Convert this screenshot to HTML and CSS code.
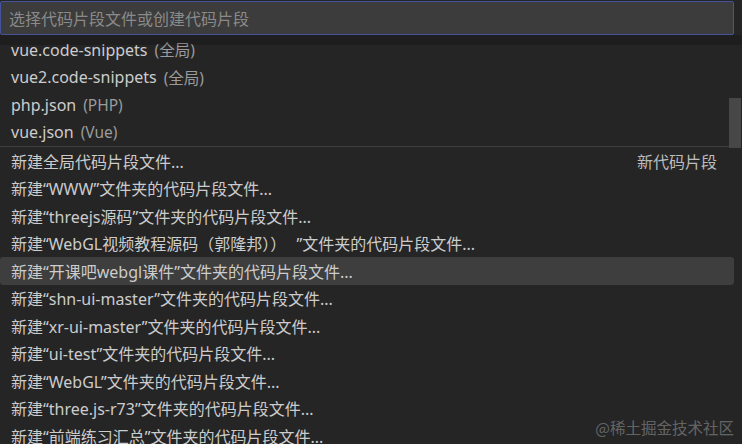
FILE: index.html
```html
<!DOCTYPE html>
<html lang="zh-CN">
<head>
    <meta charset="UTF-8">
    <meta name="viewport" content="width=device-width, initial-scale=1.0">
    <title>配置用户代码片段</title>
    <link rel="stylesheet" href="styles.css">
</head>
<body>

    <div class="picker">
        <!-- search box -->
        <div class="input-row">
            <input type="text" class="search" placeholder="选择代码片段文件或创建代码片段">
        </div>

        <div class="list">
            <div class="scroll-shadow"></div>
            <div class="scrollbar"></div>

            <!-- existing snippet files -->
            <div class="row"><span class="label">vue.code-snippets</span><span class="desc">(全局)</span></div>
            <div class="row"><span class="label">vue2.code-snippets</span><span class="desc">(全局)</span></div>
            <div class="row"><span class="label">php.json</span><span class="desc">(PHP)</span></div>
            <div class="row"><span class="label">vue.json</span><span class="desc">(Vue)</span></div>

            <!-- new snippet file -->
            <div class="row separator"><span class="label">新建全局代码片段文件...</span><span class="group">新代码片段</span></div>
            <div class="row"><span class="label">新建“WWW”文件夹的代码片段文件...</span></div>
            <div class="row"><span class="label">新建“threejs源码”文件夹的代码片段文件...</span></div>
            <div class="row"><span class="label">新建“WebGL视频教程源码（郭隆邦））<span class="wide">”</span>文件夹的代码片段文件...</span></div>
            <div class="row active"><span class="label">新建“开课吧webgl课件”文件夹的代码片段文件...</span></div>
            <div class="row"><span class="label">新建“shn-ui-master”文件夹的代码片段文件...</span></div>
            <div class="row"><span class="label">新建“xr-ui-master”文件夹的代码片段文件...</span></div>
            <div class="row"><span class="label">新建“ui-test”文件夹的代码片段文件...</span></div>
            <div class="row"><span class="label">新建“WebGL”文件夹的代码片段文件...</span></div>
            <div class="row"><span class="label">新建“three.js-r73”文件夹的代码片段文件...</span></div>
            <div class="row"><span class="label">新建“前端练习汇总”文件夹的代码片段文件...</span></div>
        </div>
    </div>

    <div class="watermark">@稀土掘金技术社区</div>

</body>
</html>
```

FILE: styles.css
```css
html, body {
    height: 100%;
}
body {
    margin: 0;
    overflow: hidden;
    background-color: #252526;
    font-family: "Noto Sans", "Noto Sans CJK SC", sans-serif;
    color: #cccccc;
}
.picker {
    width: 742px;
}
.input-row {
    padding-top: 1px;
    padding-right: 8px;
}
.search {
    display: block;
    width: 100%;
    height: 34px;
    box-sizing: border-box;
    margin: 0;
    padding: 0 8px;
    border: 1px solid #44539b;
    border-radius: 2px;
    background-color: #3c3c3c;
    color: #cccccc;
    font-family: "Noto Sans CJK SC", sans-serif;
    font-size: 16px;
    outline: none;
}
.search::placeholder {
    color: #8a8a8a;
}
.list {
    position: relative;
    padding-top: 1px;
}
.scroll-shadow {
    position: absolute;
    top: 0;
    left: 0;
    right: 0;
    height: 10px;
    background-color: rgba(0, 0, 0, 0.18);
    z-index: 2;
}
.scrollbar {
    position: absolute;
    top: 63px;
    right: 1px;
    width: 12px;
    height: 50px;
    background-color: #474747;
    z-index: 2;
}
.row {
    display: flex;
    align-items: center;
    height: 27.5px;
    margin-right: 8px;
    padding: 0 17px 0 11px;
    font-size: 16px;
    white-space: nowrap;
    border-radius: 3px;
}
.row .desc {
    margin-left: 7px;
    font-size: 15.5px;
    color: #9b9b9b;
}
.row .group {
    margin-left: auto;
    color: #bcbcbc;
}
.wide {
    display: inline-block;
    width: 1em;
    text-align: right;
}
.separator {
    box-sizing: border-box;
    height: 28.5px;
    padding-top: 1px;
    border-top: 1px solid #3f3f3f;
    border-radius: 0;
    margin-right: 13px;
    padding-right: 12px;
}
.active {
    background-color: #3e3e3e;
}
.watermark {
    position: absolute;
    right: 8px;
    bottom: 6px;
    font-family: "Noto Sans CJK SC", sans-serif;
    font-size: 15.5px;
    color: rgba(255, 255, 255, 0.3);
}
```
